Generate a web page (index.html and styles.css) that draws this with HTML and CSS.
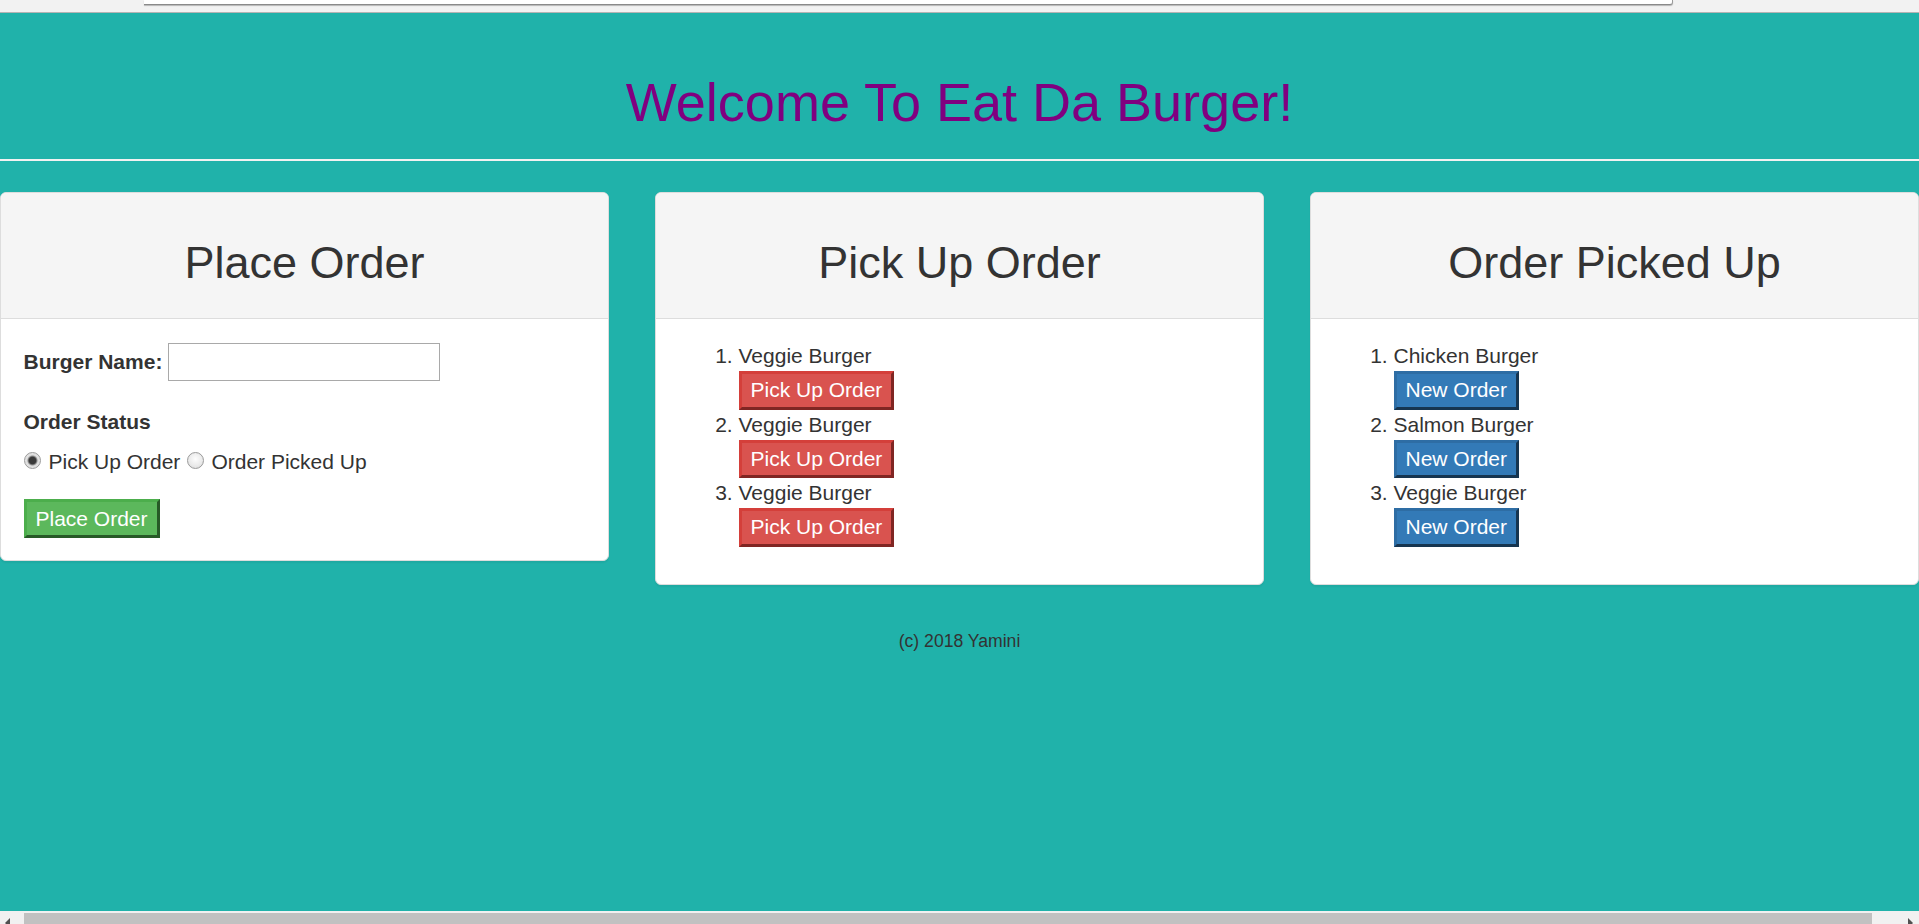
FILE: index.html
```html
<!DOCTYPE html>
<html lang="en">
<head>
<meta charset="utf-8">
<title>Eat Da Burger</title>
<link rel="stylesheet" href="styles.css">
</head>
<body>
<div class="screen">
  <div class="chrome-top"><div class="findbar"></div></div>
  <div class="page">
    <header class="masthead">
      <h1 class="title">Welcome To Eat Da Burger!</h1>
    </header>
    <hr class="rule">
    <div class="panels">
      <section class="panel">
        <div class="panel-heading"><h2 class="panel-title">Place Order</h2></div>
        <div class="panel-body">
          <form class="order-form">
            <div class="field-row">
              <label class="label" for="burger">Burger Name:</label>
              <input class="text-input" id="burger" type="text">
            </div>
            <div class="status-title">Order Status</div>
            <div class="radio-row">
              <input class="radio" type="radio" name="status" id="r1" checked>
              <label class="radio-label" for="r1">Pick Up Order</label>
              <input class="radio radio-second" type="radio" name="status" id="r2">
              <label class="radio-label" for="r2">Order Picked Up</label>
            </div>
            <div class="submit-row"><button class="btn btn-success" type="button">Place Order</button></div>
          </form>
        </div>
      </section>
      <section class="panel">
        <div class="panel-heading"><h2 class="panel-title">Pick Up Order</h2></div>
        <div class="panel-body">
          <ol class="orders">
            <li><div class="item-name">Veggie Burger</div><button class="btn btn-danger" type="button">Pick Up Order</button></li>
            <li><div class="item-name">Veggie Burger</div><button class="btn btn-danger" type="button">Pick Up Order</button></li>
            <li><div class="item-name">Veggie Burger</div><button class="btn btn-danger" type="button">Pick Up Order</button></li>
          </ol>
        </div>
      </section>
      <section class="panel">
        <div class="panel-heading"><h2 class="panel-title">Order Picked Up</h2></div>
        <div class="panel-body">
          <ol class="orders">
            <li><div class="item-name">Chicken Burger</div><button class="btn btn-primary" type="button">New Order</button></li>
            <li><div class="item-name">Salmon Burger</div><button class="btn btn-primary" type="button">New Order</button></li>
            <li><div class="item-name">Veggie Burger</div><button class="btn btn-primary" type="button">New Order</button></li>
          </ol>
        </div>
      </section>
    </div>
    <footer class="footer">(c) 2018 Yamini</footer>
  </div>
  <div class="hscroll">
    <span class="arrow arrow-left"></span>
    <div class="thumb"></div>
    <span class="arrow arrow-right"></span>
  </div>
</div>
</body>
</html>
```

FILE: styles.css
```css
* { box-sizing: border-box; }

html, body {
  margin: 0;
  padding: 0;
  overflow: hidden;
}

body {
  font-family: "Liberation Sans", Arial, Helvetica, sans-serif;
  font-size: 21px;
  line-height: 30px;
  color: #333;
  background: #20b2aa;
}

.screen {
  width: 1919px;
  height: 924px;
  display: flex;
  flex-direction: column;
  overflow: hidden;
}

/* browser chrome strip at the top */
.chrome-top {
  height: 13px;
  flex: none;
  background: #f2f2f2;
  border-bottom: 1px solid #b4b4b4;
}

.findbar {
  margin-left: 144px;
  width: 1529px;
  height: 5px;
  background: #fff;
  border-bottom: 1px solid #8a8a8a;
  border-right: 1px solid #9a9a9a;
  border-bottom-right-radius: 3px;
  box-shadow: 0 1px 1px rgba(0, 0, 0, 0.25);
}

/* page */
.page {
  flex: 1;
  background: #20b2aa;
  overflow: hidden;
}

.masthead {
  padding-top: 60px;
}

.title {
  margin: 0;
  text-align: center;
  font-size: 54px;
  line-height: 59px;
  font-weight: normal;
  color: #800080;
}

.rule {
  margin: 27px 0 31px;
  border: 0;
  border-top: 2px solid #f2f2f2;
  height: 0;
}

.panels {
  display: flex;
  gap: 46px;
  align-items: flex-start;
}

.panel {
  width: 609px;
  flex: none;
  background: #fff;
  border: 1px solid #ddd;
  border-radius: 6px;
  box-shadow: 0 1.5px 1.5px rgba(0, 0, 0, 0.05);
}

.panel-heading {
  padding: 15px 22.5px;
  background: #f5f5f5;
  border-bottom: 1px solid #ddd;
  border-radius: 5px 5px 0 0;
}

.panel-title {
  margin: 30px 0 15px;
  text-align: center;
  font-size: 45px;
  line-height: 49.5px;
  font-weight: normal;
  color: #333;
}

.panel-body {
  padding: 22.5px;
}

/* form */
.order-form {
  margin: 0;
}

.field-row {
  display: flex;
  align-items: center;
  gap: 6px;
  margin-top: 1.5px;
  height: 38.5px;
}

.label {
  font-weight: bold;
}

.text-input {
  width: 272px;
  height: 38.5px;
  border: 1px solid #a9a9a9;
  background: #fff;
  font: inherit;
  padding: 0 3px;
}

.status-title {
  margin-top: 25.5px;
  font-weight: bold;
}

.radio-row {
  margin-top: 10.3px;
  display: flex;
  align-items: center;
  height: 30px;
}

.radio {
  appearance: none;
  -webkit-appearance: none;
  width: 17px;
  height: 17px;
  margin: 0 8px 0 0;
  border: 1px solid #9a9a9a;
  border-radius: 50%;
  background: radial-gradient(circle at 50% 40%, #fdfdfd 0, #e9e9e9 60%, #d6d6d6 100%);
  position: relative;
  top: -1.5px;
}

.radio:checked {
  background: radial-gradient(circle, #3a3a3a 0 3.4px, #8a8a8a 4.4px, #dedede 5.5px, #eeeeee 100%);
}

.radio-second {
  margin-left: 6.5px;
  margin-right: 7.5px;
}

.submit-row {
  margin-top: 22.5px;
}

/* buttons */
.btn {
  display: inline-block;
  font: inherit;
  font-size: 21px;
  line-height: 30px;
  padding: 1.25px 9px;
  border-width: 3px;
  border-style: solid;
  color: #fff;
  cursor: pointer;
  vertical-align: top;
}

.btn-success {
  background: #5cb85c;
  border-color: #4cae4c #275a27 #275a27 #4cae4c;
}

.btn-danger {
  background: #d9534f;
  border-color: #d43f3a #802623 #802623 #d43f3a;
}

.btn-primary {
  background: #337ab7;
  border-color: #2e6da4 #163550 #163550 #2e6da4;
}

/* lists */
.orders {
  margin: 0 0 15px;
  padding-left: 60px;
}

.orders li {
  line-height: 30px;
}

.item-name {
  height: 30px;
}

/* footer */
.footer {
  margin-top: 40.5px;
  text-align: center;
  font-size: 17.6px;
  line-height: 30px;
  color: #333;
}

/* horizontal scrollbar strip */
.hscroll {
  height: 13px;
  flex: none;
  background: #f1f1f1;
  display: flex;
  align-items: flex-start;
  overflow: hidden;
  position: relative;
}

.thumb {
  margin-left: 24px;
  margin-top: 2px;
  width: 1848px;
  height: 16px;
  background: #c1c1c1;
}

.arrow {
  position: absolute;
  bottom: -4px;
  width: 0;
  height: 0;
  border-top: 5px solid transparent;
  border-bottom: 5px solid transparent;
}

.arrow-left {
  left: 5px;
  border-right: 5px solid #505050;
}

.arrow-right {
  right: 6px;
  border-left: 5px solid #505050;
}
```
